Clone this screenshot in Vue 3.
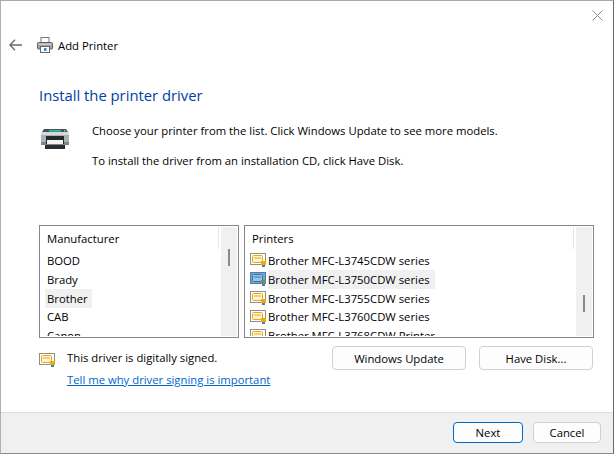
<script setup>
const makers = [
  { name: 'BOOD' },
  { name: 'Brady' },
  { name: 'Brother', selected: true },
  { name: 'CAB' },
  { name: 'Canon' },
]
const printers = [
  { name: 'Brother MFC-L3745CDW series' },
  { name: 'Brother MFC-L3750CDW series', selected: true },
  { name: 'Brother MFC-L3755CDW series' },
  { name: 'Brother MFC-L3760CDW series' },
  { name: 'Brother MFC-L3768CDW Printer' },
]
</script>

<template>
  <div class="window">
    <div class="close-row">
      <svg class="close" width="11" height="11" viewBox="0 0 11 11">
        <path d="M.5.5l10 10M10.5.5l-10 10" stroke="#8c8c8c" stroke-width="1" fill="none" />
      </svg>
    </div>

    <div class="nav">
      <svg class="back" width="13" height="12" viewBox="0 0 13 12">
        <path d="M6 .8L.9 6l5.1 5.2M1 6h12" stroke="#6a6a6a" stroke-width="1.3" fill="none" />
      </svg>
      <svg class="nav-printer" width="16" height="16" viewBox="0 0 16 16">
        <rect x="4" y="0.5" width="8" height="5" fill="#fff" stroke="#777" />
        <rect x="0.5" y="5.5" width="15" height="6.5" rx="1" fill="#9fa4a8" stroke="#5e6265" />
        <rect x="1.5" y="6.5" width="13" height="1.5" fill="#c9cdd0" />
        <rect x="3.5" y="9.5" width="9" height="6" fill="#fff" stroke="#666" />
        <rect x="7" y="11" width="2.5" height="3" fill="#3b8bc4" />
      </svg>
      <span class="nav-title">Add Printer</span>
    </div>

    <div class="content">
      <h1 class="heading">Install the printer driver</h1>

      <div class="intro">
        <svg class="big-printer" width="28" height="20" viewBox="0 0 28 20">
          <path d="M3 0h22l2 3H1z" fill="#4a4f53" />
          <rect x="8" y="1" width="12" height="1.6" fill="#2fc0a8" />
          <rect x="23" y="1" width="1.5" height="1.5" fill="#4fe07a" />
          <rect x="0" y="3" width="28" height="13" fill="#a9b1b6" />
          <rect x="0" y="3" width="28" height="3" fill="#d3dade" />
          <rect x="0" y="13" width="28" height="3" fill="#7e868b" />
          <rect x="5" y="7" width="18" height="8" fill="#26282a" />
          <rect x="6" y="11" width="16" height="4" fill="#f4f4f4" />
          <rect x="4" y="16" width="20" height="4" fill="#2b2e30" />
        </svg>
        <div class="intro-text">
          <p>Choose your printer from the list. Click Windows Update to see more models.</p>
          <p>To install the driver from an installation CD, click Have Disk.</p>
        </div>
      </div>

      <div class="lists">
        <div class="list list-left">
          <div class="list-main">
            <div class="list-head"><span>Manufacturer</span><i class="head-sep"></i></div>
            <div class="rows rows-left">
              <div v-for="m in makers" :key="m.name" class="row">
                <span class="label" :class="{ sel: m.selected }">{{ m.name }}</span>
              </div>
            </div>
          </div>
          <div class="scroll"><i class="thumb thumb-left"></i></div>
        </div>

        <div class="list list-right">
          <div class="list-main">
            <div class="list-head"><span>Printers</span><i class="head-sep"></i></div>
            <div class="rows rows-right">
              <div v-for="p in printers" :key="p.name" class="row">
                <svg class="cert" width="16" height="14" viewBox="0 0 16 14">
                  <rect x="0.5" y="0.5" width="15" height="11" :fill="p.selected ? '#6ea6d6' : '#fff'" :stroke="p.selected ? '#4a7fab' : '#8f8f8f'" />
                  <rect x="2.5" y="2.5" width="10" height="7" rx="1" :fill="p.selected ? '#9cc3e2' : '#fff5d6'" :stroke="p.selected ? '#3b78a8' : '#e8a90c'" />
                  <path d="M4 5h7" :stroke="p.selected ? '#3b78a8' : '#e8a90c'" />
                  <rect x="11" y="8" width="5" height="4" :fill="p.selected ? '#6f8f6a' : '#efab0a'" />
                  <rect x="12" y="12" width="3" height="2" fill="#3f7fc0" />
                </svg>
                <span class="label" :class="{ sel: p.selected }">{{ p.name }}</span>
              </div>
            </div>
          </div>
          <div class="scroll"><i class="thumb thumb-right"></i></div>
        </div>
      </div>

      <div class="below">
        <div class="signed">
          <div class="signed-line">
            <svg class="cert-small" width="16" height="14" viewBox="0 0 16 14">
              <rect x="0.5" y="0.5" width="15" height="11" fill="#fff" stroke="#8f8f8f" />
              <rect x="2.5" y="2.5" width="10" height="7" rx="1" fill="#fff5d6" stroke="#e8a90c" />
              <path d="M4 5h7" stroke="#e8a90c" />
              <rect x="11" y="8" width="5" height="4" fill="#efab0a" />
              <rect x="12" y="12" width="3" height="2" fill="#3f7fc0" />
            </svg>
            <span>This driver is digitally signed.</span>
          </div>
          <a class="link">Tell me why driver signing is important</a>
        </div>
        <div class="actions">
          <button class="btn btn-update">Windows Update</button>
          <button class="btn btn-disk">Have Disk...</button>
        </div>
      </div>
    </div>

    <div class="footer">
      <button class="btn btn-next">Next</button>
      <button class="btn btn-cancel">Cancel</button>
    </div>
  </div>
</template>

<style>
html, body { margin: 0; background: #fff; }
</style>

<style scoped>
.window {
  width: 614px;
  height: 454px;
  box-sizing: border-box;
  display: flex;
  flex-direction: column;
  background: #fff;
  border-top: 1px solid #a8a8a8;
  border-left: 1px solid #b0b0b0;
  border-right: 1px solid #6a6a6a;
  border-bottom: 1px solid #8a8a8a;
  font-family: "Open Sans", "Noto Sans", sans-serif;
  font-size: 11.3px;
  color: #000;
  overflow: hidden;
}
.close-row {
  height: 36px;
  display: flex;
  justify-content: flex-end;
  padding: 9px 10px 0 0;
  box-sizing: border-box;
}
.close { display: block; }
.nav {
  height: 16px;
  display: flex;
  align-items: center;
}
.back { margin-left: 8px; }
.nav-printer { margin-left: 15px; }
.nav-title { margin-left: 5px; }
.content {
  flex: 1;
  padding: 0 0 0 38px;
  display: flex;
  flex-direction: column;
  min-height: 0;
}
.heading {
  margin: 33px 0 0;
  font-size: 14.8px;
  line-height: 19px;
  font-weight: 400;
  color: #003da5;
}
.intro {
  display: flex;
  margin-top: 13px;
  height: 107px;
}
.big-printer { margin: 11px 0 0 2px; flex: none; }
.intro-text { margin-left: 23px; padding-top: 5px; }
.intro-text p { margin: 0 0 14px; line-height: 16px; }
.lists {
  display: flex;
  gap: 5px;
  height: 113px;
}
.list {
  box-sizing: border-box;
  border: 1px solid #82878c;
  display: flex;
  padding: 1px;
  overflow: hidden;
}
.list-left { width: 200px; }
.list-right { width: 350px; }
.list-main { flex: 1; min-width: 0; overflow: hidden; }
.list-head {
  height: 23px;
  display: flex;
  justify-content: space-between;
  padding: 3px 0 0 6px;
  box-sizing: border-box;
  line-height: 17px;
}
.head-sep {
  width: 1px;
  height: 22px;
  margin-top: -3px;
  background: #e5e5e5;
}
.rows-left { padding: 1px 0 0 4px; }
.rows-right { padding: 1px 0 0 4px; }
.row {
  height: 18.8px;
  display: flex;
  align-items: center;
}
.cert { flex: none; margin-right: 2px; }
.label {
  display: block;
  line-height: 19px;
  padding: 0 4px 0 2px;
}
.rows-right .label { padding: 0 5px 0 0; }
.label.sel { background: #f0f0f0; }
.scroll {
  flex: none;
  width: 16px;
  margin-left: 2px;
  background: #f0f0f0;
  display: flex;
  justify-content: center;
}
.thumb {
  width: 2px;
  height: 17px;
  background: #8a8a8a;
}
.thumb-left { margin-top: 22px; }
.thumb-right { margin-top: 68px; }
.below {
  display: flex;
  justify-content: space-between;
  width: 554px;
  margin-top: 8px;
}
.signed-line {
  display: flex;
  align-items: center;
  height: 18px;
  margin-top: 2px;
}
.cert-small { margin-right: 12px; margin-top: 6px; }
.link {
  display: block;
  margin: 5px 0 0 28px;
  color: #0066cc;
  text-decoration: underline;
  line-height: 17px;
}
.actions { display: flex; gap: 13px; }
.btn {
  box-sizing: border-box;
  border: 1px solid #d0d0d0;
  border-radius: 4px;
  background: #fdfdfd;
  font: inherit;
  color: #000;
  padding: 0;
}
.btn-update { width: 134px; height: 24px; }
.btn-disk { width: 114px; height: 24px; }
.footer {
  height: 41px;
  box-sizing: border-box;
  background: #f0f0f0;
  border-top: 1px solid #dfdfdf;
  display: flex;
  justify-content: flex-end;
  gap: 10px;
  padding: 9px 12px 0 0;
}
.btn-next {
  width: 70px;
  height: 21px;
  border: 1px solid #0067c0;
}
.btn-cancel { width: 68px; height: 21px; }
</style>
